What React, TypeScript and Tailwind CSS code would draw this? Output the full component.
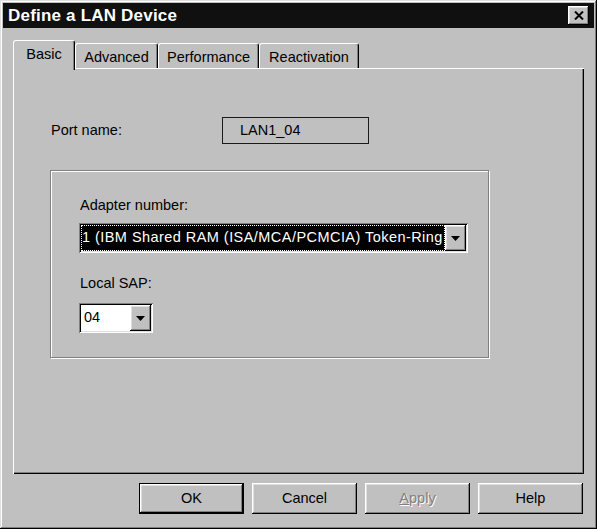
import React from "react";

const raised =
  "shadow-[inset_-1px_-1px_#000,inset_1px_1px_#fff,inset_-2px_-2px_#808080,inset_2px_2px_#dfdfdf]";
const sunken =
  "shadow-[inset_1px_1px_#808080,inset_-1px_-1px_#fff,inset_2px_2px_#000,inset_-2px_-2px_#dfdfdf]";

function DropArrow() {
  return (
    <div className={`w-[21px] h-full bg-[#c0c0c0] flex items-center justify-center shrink-0 ${raised}`}>
      <svg width="9" height="5" viewBox="0 0 9 5">
        <path d="M0 0h9L4.5 5z" fill="#000" />
      </svg>
    </div>
  );
}

function Tab({ label, width, active }: { label: string; width: number; active?: boolean }) {
  return (
    <div
      className={`flex justify-center border-t border-l border-white border-r border-r-black rounded-t-[3px] shadow-[inset_-1px_0_#808080] bg-[#c0c0c0] ${
        active ? "h-[30px] pt-[4px] -mb-[2px] relative z-10" : "h-[25px] pt-[4px]"
      }`}
      style={{ width }}
    >
      <span className="leading-[18px]">{label}</span>
    </div>
  );
}

function DialogButton({
  children,
  isDefault,
  disabled,
}: {
  children: React.ReactNode;
  isDefault?: boolean;
  disabled?: boolean;
}) {
  return (
    <div
      className={`w-[105px] h-[31px] flex items-center justify-center bg-[#c0c0c0] ${
        isDefault ? "border border-black" : ""
      }`}
    >
      <div className={`w-full h-full flex items-center justify-center ${raised}`}>
        <span
          className={
            disabled ? "text-[#808080] [text-shadow:1px_1px_#fff]" : "text-black"
          }
        >
          {children}
        </span>
      </div>
    </div>
  );
}

export default function App() {
  return (
    <div className="w-[597px] h-[529px] bg-[#c0c0c0] p-[3px] flex flex-col text-[14.5px] text-black [font-family:'Liberation_Sans',Arial,sans-serif] shadow-[inset_-1px_-1px_#000,inset_1px_1px_#dfdfdf,inset_-2px_-2px_#808080,inset_2px_2px_#fff]">
      {/* Title bar */}
      <div className="h-[25px] bg-[#101010] flex items-center justify-between pl-[5px] pr-[5px]">
        <span className="text-white font-bold text-[17px] tracking-[0.2px]">Define a LAN Device</span>
        <div className={`w-[21px] h-[19px] bg-[#c0c0c0] flex items-center justify-center ${raised}`}>
          <svg width="10" height="9" viewBox="0 0 10 9">
            <path d="M1 0.5L9 8.5M9 0.5L1 8.5" stroke="#000" strokeWidth="2" />
          </svg>
        </div>
      </div>

      <div className="flex flex-col px-[10px] mt-[12px]">
        {/* Tabs */}
        <div className="flex items-end h-[28px]">
          <Tab label="Basic" width={62} active />
          <Tab label="Advanced" width={83} />
          <Tab label="Performance" width={101} />
          <Tab label="Reactivation" width={100} />
        </div>

        {/* Tab page */}
        <div className="h-[406px] bg-[#c0c0c0] shadow-[inset_1px_1px_#fff,inset_-1px_-1px_#000,inset_-2px_-2px_#808080] pt-[49px] pl-[37px]">
          <div className="flex items-center h-[27px]">
            <span className="w-[172px] pl-[1px]">Port name:</span>
            <div className="w-[147px] h-[27px] border border-[#1a1a1a] flex items-center pl-[17px]">
              LAN1_04
            </div>
          </div>

          {/* Group box */}
          <div className="mt-[26px] w-[439px] h-[188px] border border-[#808080] shadow-[inset_1px_1px_#fff,1px_1px_#fff] pl-[28px] pt-[25px]">
            <div className="leading-[18px] pl-[1px]">Adapter number:</div>
            <div className={`mt-[9px] w-[389px] h-[30px] bg-white flex p-[2px] ${sunken}`}>
              <div className="flex-1 min-w-0 bg-black text-white flex items-center pl-[1px] overflow-hidden whitespace-nowrap tracking-[0.45px] outline-1 outline-dotted outline-white -outline-offset-1">
                1 (IBM Shared RAM (ISA/MCA/PCMCIA) Token-Ring
              </div>
              <DropArrow />
            </div>
            <div className="leading-[18px] mt-[21px] pl-[1px]">Local SAP:</div>
            <div className={`mt-[11px] w-[74px] h-[30px] bg-white flex p-[2px] ${sunken}`}>
              <div className="flex-1 flex items-center pl-[3px]">04</div>
              <DropArrow />
            </div>
          </div>
        </div>

        {/* Buttons */}
        <div className="flex justify-end gap-[8px] mt-[9px] pr-[1px]">
          <DialogButton isDefault>OK</DialogButton>
          <DialogButton>Cancel</DialogButton>
          <DialogButton disabled>
            <span className="underline">A</span>pply
          </DialogButton>
          <DialogButton>Help</DialogButton>
        </div>
      </div>
    </div>
  );
}
